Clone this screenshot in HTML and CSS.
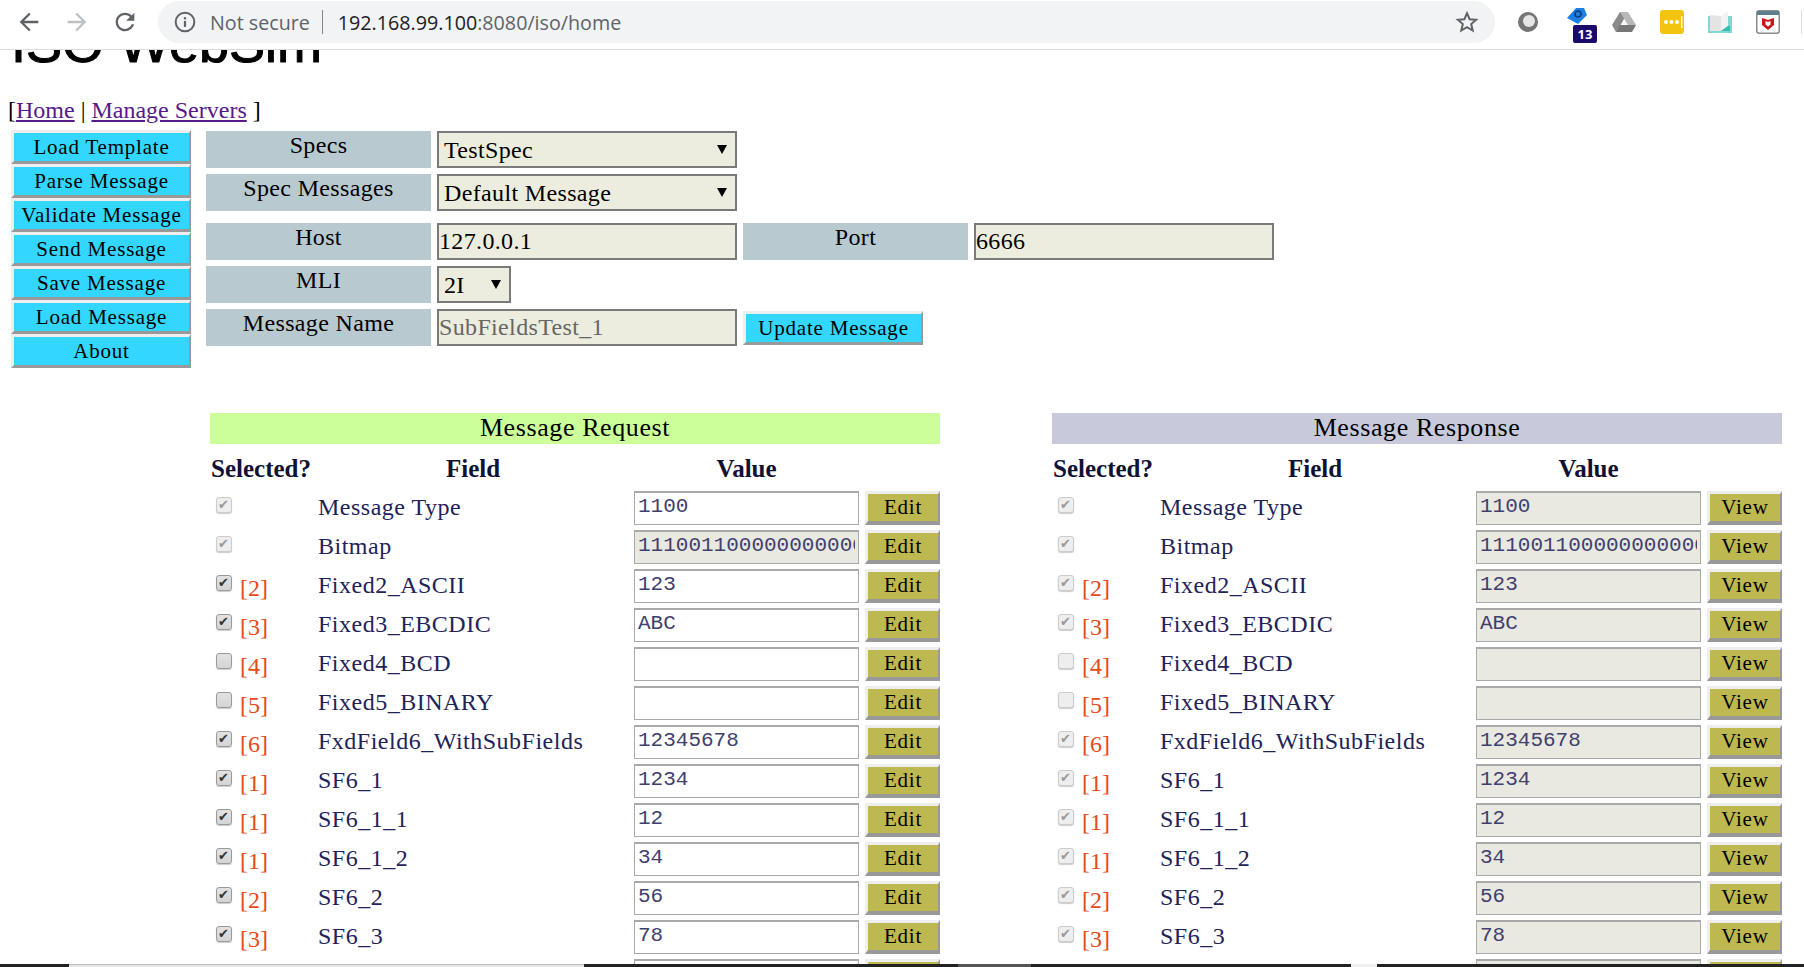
FILE: index.html
```html
<!DOCTYPE html>
<html lang="en">
<head>
    <meta charset="UTF-8">
    <title>ISO WebSim</title>
    <link rel="stylesheet" href="styles.css">
</head>
<body>
    <div class="toolbar">
        <div class="nav-btn">
            <svg width="28" height="28" viewBox="0 0 24 24"><path fill="#5f6368" d="M20 11H7.83l5.59-5.59L12 4l-8 8 8 8 1.41-1.41L7.83 13H20v-2z"/></svg>
        </div>
        <div class="nav-btn">
            <svg width="28" height="28" viewBox="0 0 24 24"><path fill="#bdc1c6" d="M4 11h12.17l-5.59-5.59L12 4l8 8-8 8-1.41-1.41L16.17 13H4v-2z"/></svg>
        </div>
        <div class="nav-btn">
            <svg width="28" height="28" viewBox="0 0 24 24"><path fill="#5f6368" d="M17.65 6.35C16.2 4.9 14.21 4 12 4c-4.42 0-7.99 3.58-7.99 8s3.57 8 7.99 8c3.73 0 6.84-2.55 7.73-6h-2.08c-.82 2.33-3.04 4-5.65 4-3.31 0-6-2.69-6-6s2.69-6 6-6c1.66 0 3.14.69 4.22 1.78L13 11h7V4l-2.35 2.35z"/></svg>
        </div>
        <div class="omnibox">
            <svg class="info-icon" width="22" height="22" viewBox="0 0 20 20"><circle cx="10" cy="10" r="8.5" fill="none" stroke="#5f6368" stroke-width="1.8"/><rect x="9" y="9" width="2" height="5.5" fill="#5f6368"/><rect x="9" y="5.6" width="2" height="2" fill="#5f6368"/></svg>
            <span class="not-secure">Not secure</span>
            <span class="omni-divider"></span>
            <span class="url">192.168.99.100<span class="url-rest">:8080/iso/home</span></span>
            <svg class="star" width="24" height="24" viewBox="0 0 24 24"><path fill="none" stroke="#5f6368" stroke-width="2" stroke-linejoin="miter" d="M12 3.2l2.6 6 6.5.6-4.9 4.3 1.5 6.4-5.7-3.4-5.7 3.4 1.5-6.4-4.9-4.3 6.5-.6z"/></svg>
        </div>
        <div class="ext">
            <svg width="24" height="24" viewBox="0 0 24 24"><circle cx="12" cy="12" r="10" fill="#757575"/><circle cx="13" cy="11" r="6" fill="#e6e6e6"/></svg>
        </div>
        <div class="ext">
            <svg class="ext-tag" width="24" height="24" viewBox="0 0 24 24"><path fill="#1a80e6" d="M3 12L12 2h8l3 7-9 9z"/><circle cx="14" cy="8" r="3" fill="none" stroke="#0b3c78" stroke-width="1.6"/></svg>
            <span class="ext-badge">13</span>
        </div>
        <div class="ext">
            <svg width="26" height="24" viewBox="0 0 26 24"><path fill="#8a8a8a" d="M9 2h8l-8 14-4 6-4-7z"/><path fill="#b8b8b8" d="M17 2l8 13h-8L9 2z"/><path fill="#777" d="M5 22l4-7h16l-4 7z"/><path fill="#fff" d="M13 10l2.6 5h-5.2z"/></svg>
        </div>
        <div class="ext">
            <svg width="24" height="24" viewBox="0 0 24 24"><rect width="24" height="24" rx="3" fill="#f2c40f"/><circle cx="6" cy="12" r="2" fill="#fff"/><circle cx="11.5" cy="12" r="2" fill="#fff"/><circle cx="17" cy="12" r="2" fill="#fff"/><rect x="21" y="6" width="1.4" height="12" fill="#fff"/></svg>
        </div>
        <div class="ext">
            <svg width="24" height="22" viewBox="0 0 24 22"><path fill="#7fd8d2" d="M0 5h24v17H0z"/><path fill="#e4e4e4" d="M2 4l11 1v15H2z"/><path fill="#f2f2f2" d="M13 5l7-5v15l-7 5z"/><path fill="#35bdb2" d="M13 20l7-5h2v5z"/></svg>
        </div>
        <div class="ext">
            <svg width="24" height="24" viewBox="0 0 24 24"><rect x=".75" y=".75" width="22.5" height="22.5" rx="2.5" fill="#fff" stroke="#8c8c8c" stroke-width="1.5"/><rect x="1" y="1" width="22" height="4" fill="#5b7f8c"/><path fill="#c8161d" d="M6 8l6 2 6-2v7l-6 5-6-5z"/><path fill="#fff" d="M9.5 11l2.5 1 2.5-1v3.5l-2.5 2-2.5-2z"/></svg>
        </div>
        <span class="toolbar-sep"></span>
    </div>

    <div class="viewport">
        <h1 class="title">ISO WebSim</h1>
        <div class="links">[<a href="#">Home</a> | <a href="#">Manage Servers</a> ]</div>

        <div class="main">
            <div class="sidebar">
                <button class="side-btn">Load Template</button>
                <button class="side-btn">Parse Message</button>
                <button class="side-btn">Validate Message</button>
                <button class="side-btn">Send Message</button>
                <button class="side-btn">Save Message</button>
                <button class="side-btn">Load Message</button>
                <button class="side-btn">About</button>
            </div>

            <div class="settings">
                <div class="form-row">
                    <div class="form-label">Specs</div>
                    <div class="select-wrap wide"><select class="form-field"><option>TestSpec</option></select></div>
                </div>
                <div class="form-row">
                    <div class="form-label">Spec Messages</div>
                    <div class="select-wrap wide"><select class="form-field"><option>Default Message</option></select></div>
                </div>
                <div class="form-row spaced">
                    <div class="form-label">Host</div>
                    <input class="form-field text-field wide" value="127.0.0.1">
                    <div class="form-label">Port</div>
                    <input class="form-field text-field wide" value="6666">
                </div>
                <div class="form-row">
                    <div class="form-label">MLI</div>
                    <div class="select-wrap narrow"><select class="form-field"><option>2I</option></select></div>
                </div>
                <div class="form-row">
                    <div class="form-label">Message Name</div>
                    <input class="form-field text-field wide muted" value="SubFieldsTest_1" readonly>
                    <button class="side-btn update-btn">Update Message</button>
                </div>
            </div>
        </div>

        <div class="messages">
            <div class="panel">
                <div class="panel-title request">Message Request</div>
                <div class="col-heads">
                    <span class="head-sel">Selected?</span>
                    <span class="head-field">Field</span>
                    <span class="head-value">Value</span>
                </div>
                <div class="msg-row"><div class="sel"><input type="checkbox" checked disabled></div><div class="field-name">Message Type</div><input class="value" value="1100"><button class="action">Edit</button></div>
                <div class="msg-row"><div class="sel"><input type="checkbox" checked disabled></div><div class="field-name">Bitmap</div><input class="value locked" value="1110011000000000000" readonly><button class="action">Edit</button></div>
                <div class="msg-row"><div class="sel"><input type="checkbox" checked><span class="idx">[2]</span></div><div class="field-name">Fixed2_ASCII</div><input class="value" value="123"><button class="action">Edit</button></div>
                <div class="msg-row"><div class="sel"><input type="checkbox" checked><span class="idx">[3]</span></div><div class="field-name">Fixed3_EBCDIC</div><input class="value" value="ABC"><button class="action">Edit</button></div>
                <div class="msg-row"><div class="sel"><input type="checkbox"><span class="idx">[4]</span></div><div class="field-name">Fixed4_BCD</div><input class="value" value=""><button class="action">Edit</button></div>
                <div class="msg-row"><div class="sel"><input type="checkbox"><span class="idx">[5]</span></div><div class="field-name">Fixed5_BINARY</div><input class="value" value=""><button class="action">Edit</button></div>
                <div class="msg-row"><div class="sel"><input type="checkbox" checked><span class="idx">[6]</span></div><div class="field-name">FxdField6_WithSubFields</div><input class="value" value="12345678"><button class="action">Edit</button></div>
                <div class="msg-row"><div class="sel"><input type="checkbox" checked><span class="idx">[1]</span></div><div class="field-name">SF6_1</div><input class="value" value="1234"><button class="action">Edit</button></div>
                <div class="msg-row"><div class="sel"><input type="checkbox" checked><span class="idx">[1]</span></div><div class="field-name">SF6_1_1</div><input class="value" value="12"><button class="action">Edit</button></div>
                <div class="msg-row"><div class="sel"><input type="checkbox" checked><span class="idx">[1]</span></div><div class="field-name">SF6_1_2</div><input class="value" value="34"><button class="action">Edit</button></div>
                <div class="msg-row"><div class="sel"><input type="checkbox" checked><span class="idx">[2]</span></div><div class="field-name">SF6_2</div><input class="value" value="56"><button class="action">Edit</button></div>
                <div class="msg-row"><div class="sel"><input type="checkbox" checked><span class="idx">[3]</span></div><div class="field-name">SF6_3</div><input class="value" value="78"><button class="action">Edit</button></div>
                <div class="msg-row"><div class="sel"></div><div class="field-name"></div><input class="value" value=""><button class="action">Edit</button></div>
            </div>

            <div class="panel">
                <div class="panel-title response">Message Response</div>
                <div class="col-heads">
                    <span class="head-sel">Selected?</span>
                    <span class="head-field">Field</span>
                    <span class="head-value">Value</span>
                </div>
                <div class="msg-row"><div class="sel"><input type="checkbox" checked disabled></div><div class="field-name">Message Type</div><input class="value locked" value="1100" readonly><button class="action">View</button></div>
                <div class="msg-row"><div class="sel"><input type="checkbox" checked disabled></div><div class="field-name">Bitmap</div><input class="value locked" value="1110011000000000000" readonly><button class="action">View</button></div>
                <div class="msg-row"><div class="sel"><input type="checkbox" checked disabled><span class="idx">[2]</span></div><div class="field-name">Fixed2_ASCII</div><input class="value locked" value="123" readonly><button class="action">View</button></div>
                <div class="msg-row"><div class="sel"><input type="checkbox" checked disabled><span class="idx">[3]</span></div><div class="field-name">Fixed3_EBCDIC</div><input class="value locked" value="ABC" readonly><button class="action">View</button></div>
                <div class="msg-row"><div class="sel"><input type="checkbox" disabled><span class="idx">[4]</span></div><div class="field-name">Fixed4_BCD</div><input class="value locked" value="" readonly><button class="action">View</button></div>
                <div class="msg-row"><div class="sel"><input type="checkbox" disabled><span class="idx">[5]</span></div><div class="field-name">Fixed5_BINARY</div><input class="value locked" value="" readonly><button class="action">View</button></div>
                <div class="msg-row"><div class="sel"><input type="checkbox" checked disabled><span class="idx">[6]</span></div><div class="field-name">FxdField6_WithSubFields</div><input class="value locked" value="12345678" readonly><button class="action">View</button></div>
                <div class="msg-row"><div class="sel"><input type="checkbox" checked disabled><span class="idx">[1]</span></div><div class="field-name">SF6_1</div><input class="value locked" value="1234" readonly><button class="action">View</button></div>
                <div class="msg-row"><div class="sel"><input type="checkbox" checked disabled><span class="idx">[1]</span></div><div class="field-name">SF6_1_1</div><input class="value locked" value="12" readonly><button class="action">View</button></div>
                <div class="msg-row"><div class="sel"><input type="checkbox" checked disabled><span class="idx">[1]</span></div><div class="field-name">SF6_1_2</div><input class="value locked" value="34" readonly><button class="action">View</button></div>
                <div class="msg-row"><div class="sel"><input type="checkbox" checked disabled><span class="idx">[2]</span></div><div class="field-name">SF6_2</div><input class="value locked" value="56" readonly><button class="action">View</button></div>
                <div class="msg-row"><div class="sel"><input type="checkbox" checked disabled><span class="idx">[3]</span></div><div class="field-name">SF6_3</div><input class="value locked" value="78" readonly><button class="action">View</button></div>
                <div class="msg-row"><div class="sel"></div><div class="field-name"></div><input class="value locked" value="" readonly><button class="action">View</button></div>
            </div>
        </div>
    </div>

    <div class="taskbar">
        <span class="seg seg-a"></span>
        <span class="seg seg-b"></span>
        <span class="seg seg-c"></span>
        <span class="seg seg-d"></span>
        <span class="seg seg-e"></span>
        <span class="seg seg-f"></span>
        <span class="seg seg-g"></span>
    </div>
</body>
</html>
```

FILE: styles.css
```css
/* General Styles */
html, body {
    height: 100%;
}

body {
    margin: 0;
    display: flex;
    flex-direction: column;
    overflow: hidden;
    background-color: white;
    color: black;
    font-family: "Liberation Serif", serif;
}

/* Browser toolbar */
.toolbar {
    flex: none;
    height: 49px;
    display: flex;
    align-items: flex-start;
    padding-left: 5px;
    box-sizing: content-box;
    border-bottom: 1px solid #dadce0;
}

.nav-btn {
    width: 48px;
    height: 44px;
    display: flex;
    align-items: center;
    justify-content: center;
}

.omnibox {
    width: 1337px;
    height: 42px;
    margin: 1px 9px 0 9px;
    padding-left: 16px;
    box-sizing: border-box;
    display: flex;
    align-items: center;
    background-color: #f1f3f4;
    border-radius: 21px;
    font-family: "Open Sans", sans-serif;
    font-size: 19.7px;
}

.not-secure {
    margin-left: 14px;
    color: #5f6368;
}

.omni-divider {
    width: 1px;
    height: 24px;
    margin: 0 15px 0 12px;
    background-color: #80868b;
}

.url {
    color: #202124;
}

.url-rest {
    color: #5f6368;
}

.star {
    margin-left: auto;
    margin-right: 16px;
}

.ext {
    position: relative;
    width: 48px;
    height: 44px;
    display: flex;
    align-items: center;
    justify-content: center;
}

.ext-tag {
    margin-top: -8px;
}

.ext-badge {
    position: absolute;
    left: 21px;
    top: 25px;
    width: 24px;
    height: 18px;
    border-radius: 2px;
    background-color: #1c0a6b;
    color: white;
    font-family: "Open Sans", sans-serif;
    font-size: 13px;
    font-weight: bold;
    line-height: 18px;
    text-align: center;
}

.toolbar-sep {
    width: 1px;
    height: 24px;
    margin: 10px 0 0 9px;
    background-color: #dadce0;
}

/* Page area */
.viewport {
    flex: 1;
    min-height: 0;
    overflow: hidden;
}

.title {
    height: 50px;
    margin: -32px 0 28px 11px;
    font-family: "Liberation Sans", sans-serif;
    font-size: 54px;
    font-weight: normal;
    line-height: 50px;
    -webkit-text-stroke: 1px black;
}

.links {
    height: 28px;
    margin-bottom: 6px;
    padding-left: 8px;
    font-size: 24px;
    line-height: 28px;
}

.links a {
    color: #551a8b;
}

.main {
    display: flex;
    gap: 15px;
    margin-left: 11px;
}

/* Sidebar */
.sidebar {
    width: 180px;
    display: flex;
    flex-direction: column;
}

.side-btn {
    height: 34px;
    padding: 0;
    border-style: solid;
    border-width: 3px 2px 3px 3px;
    border-color: #eeeeee #999999 #999999 #eeeeee;
    background-color: #33d6ff;
    color: black;
    font-family: "Liberation Serif", serif;
    font-size: 21px;
    letter-spacing: 0.8px;
}

/* Settings form */
.settings {
    padding-top: 1px;
}

.form-row {
    display: flex;
    gap: 6px;
    height: 37px;
    margin-bottom: 6px;
}

.form-row.spaced {
    margin-top: 12px;
}

.form-label {
    width: 225px;
    height: 37px;
    padding-top: 1px;
    box-sizing: border-box;
    background-color: #b9c9d0;
    font-size: 24px;
    letter-spacing: 0.35px;
    text-align: center;
}

.form-field {
    width: 100%;
    height: 37px;
    box-sizing: border-box;
    border: 2px solid #7a7a7a;
    border-radius: 0;
    background-color: #ecedde;
    color: black;
    font-family: "Liberation Serif", serif;
    font-size: 24px;
    letter-spacing: 0.35px;
    appearance: none;
    padding: 0 0 0 5px;
    outline: none;
}

.text-field {
    padding-left: 0;
}

.wide {
    width: 300px;
}

.narrow {
    width: 74px;
}

.muted {
    color: #666666;
}

.select-wrap {
    position: relative;
    height: 37px;
}

.select-wrap::after {
    content: "";
    position: absolute;
    right: 10px;
    top: 14px;
    border-left: 5px solid transparent;
    border-right: 5px solid transparent;
    border-top: 9px solid black;
}

.update-btn {
    width: 180px;
    margin-top: 2px;
}

/* Message panels */
.messages {
    display: flex;
    gap: 112px;
    margin: 45px 0 0 210px;
}

.panel {
    width: 730px;
}

.panel-title {
    height: 31px;
    font-size: 26px;
    letter-spacing: 0.6px;
    line-height: 30px;
    text-align: center;
}

.request {
    background-color: #ccff99;
}

.response {
    background-color: #c8cadc;
}

.col-heads {
    display: grid;
    grid-template-columns: 108px 316px 225px 81px;
    height: 47px;
    align-items: center;
    font-size: 25px;
    font-weight: bold;
    line-height: 50px;
    color: #111133;
}

.head-sel {
    padding-left: 1px;
}

.head-field {
    padding-left: 128px;
}

.head-value {
    text-align: center;
}

.msg-row {
    display: grid;
    grid-template-columns: 108px 316px 225px 75px;
    column-gap: 0;
    height: 34px;
    margin-bottom: 5px;
}

.sel {
    display: flex;
    align-items: flex-start;
    padding-left: 6px;
}

.sel input {
    appearance: none;
    position: relative;
    width: 16px;
    height: 16px;
    margin: 6px 8px 0 0;
    border: 1px solid #999999;
    border-radius: 3px;
    background: linear-gradient(#e2e2e2, #d4d4d4);
    box-shadow: 0 1px 1px #cccccc;
}

.sel input:checked::before {
    content: "\2714";
    position: absolute;
    left: 1px;
    top: -1px;
    color: #333333;
    font-family: "DejaVu Sans", sans-serif;
    font-size: 13px;
    line-height: 16px;
}

.sel input:disabled {
    border-color: #cccccc;
    background: #eeeeee;
}

.sel input:disabled:checked::before {
    color: #999999;
}

.idx {
    color: #e64a19;
    font-size: 24px;
    line-height: 34px;
    margin-top: 2px;
}

.field-name {
    color: #22225a;
    font-size: 24px;
    letter-spacing: 0.5px;
    line-height: 32px;
}

.value {
    width: 225px;
    height: 34px;
    box-sizing: border-box;
    margin: 0;
    padding: 0 3px 4px 3px;
    border: 1px solid #a9a9a9;
    border-top-width: 2px;
    border-radius: 0;
    background-color: white;
    color: #40406e;
    font-family: "Liberation Mono", monospace;
    font-size: 21px;
    outline: none;
}

.value.locked {
    background-color: #e9e9e2;
}

.action {
    width: 75px;
    height: 34px;
    margin-left: 6px;
    padding: 0;
    border-style: solid;
    border-width: 3px 2px 4px 3px;
    border-color: #eeeeee #999999 #999999 #eeeeee;
    background-color: #bdb84f;
    color: black;
    font-family: "Liberation Serif", serif;
    font-size: 21px;
    letter-spacing: 0.8px;
}

/* Desktop strip along the bottom */
.taskbar {
    flex: none;
    height: 3px;
    display: flex;
    background-color: #222222;
}

.seg-a { width: 69px; }
.seg-b { width: 515px; background-color: #e6e6e6; border-top: 1px solid #bbbbbb; box-sizing: border-box; }
.seg-c { width: 374px; }
.seg-d { width: 73px; background-color: #555555; }
.seg-e { width: 320px; }
.seg-f { width: 26px; background-color: #eeeeee; }
.seg-g { flex: 1; }
```
